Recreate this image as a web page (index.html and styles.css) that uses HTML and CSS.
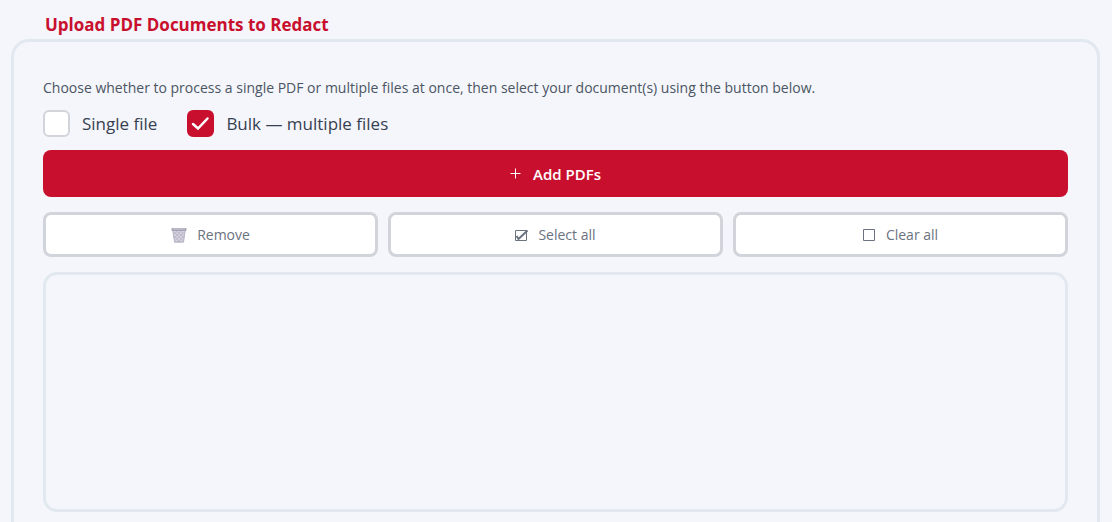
FILE: index.html
```html
<!DOCTYPE html>
<html lang="en">
<head>
<meta charset="utf-8">
<meta name="viewport" content="width=device-width, initial-scale=1">
<title>Upload PDF Documents to Redact</title>
<link rel="stylesheet" href="styles.css">
</head>
<body>
<main class="page">
  <h1 class="title" id="upload-title">Upload PDF Documents to Redact</h1>
  <section class="panel" aria-labelledby="upload-title">
    <p class="hint">Choose whether to process a single PDF or multiple files at once, then select your document(s) using the button below.</p>
    <div class="modes">
      <label class="mode" for="single"><input class="check" type="checkbox" id="single">Single file</label>
      <label class="mode" for="bulk"><input class="check" type="checkbox" id="bulk" checked>Bulk — multiple files</label>
    </div>
    <button class="add" type="button">
      <svg class="plus" viewBox="0 0 11 11" aria-hidden="true"><path d="M5.5 .5v10M.5 5.5h10"/></svg>
      <span>Add PDFs</span>
    </button>
    <div class="actions">
      <button class="action action-remove" type="button">
        <svg class="bin" viewBox="0 0 16 16" aria-hidden="true">
          <path d="M1.5 3.5h13l-1.6 11.2q-.1.8-1 .8H4.1q-.9 0-1-.8z" fill="#d6d3e0"/>
          <path d="M3 5l9.5 9M5.5 4l7.5 7M9 4l4.5 4.5M3.3 9l5.5 6M13 5l-9.5 9M10 4l-7 7M6.5 4L2.7 7.7M12.7 9L7 15" stroke="#b7b3c5" stroke-width=".8" fill="none"/>
          <path d="M2 4l1.5 11M14 4l-1.5 11" stroke="#b9b5c8" fill="none"/>
          <rect x=".5" y="1" width="15" height="3" rx="1" fill="#a5a1b2"/>
          <path d="M2 2h12" stroke="#d1cedb" fill="none"/>
          <path d="M3.5 15h9" stroke="#aaa6b8" fill="none"/>
        </svg>
        <span>Remove</span>
      </button>
      <button class="action" type="button">
        <svg class="box" viewBox="0 0 13 12" aria-hidden="true"><path d="M.5 1.5h11v10H.5z"/><path class="tick" d="M1.5 7l2 3L12.5 1.5"/></svg>
        <span>Select all</span>
      </button>
      <button class="action" type="button">
        <svg class="box" viewBox="0 0 13 12" aria-hidden="true"><path d="M.5 .5h11v11H.5z"/></svg>
        <span>Clear all</span>
      </button>
    </div>
    <div class="files" role="list" aria-label="Selected files"></div>
  </section>
</main>
</body>
</html>
```
FILE: styles.css
```css
* {
  box-sizing: border-box;
}

body {
  margin: 0;
  height: 100vh;
  overflow: hidden;
  background: #f4f6fb;
  color: #374151;
  font-family: "Segoe UI", "Open Sans", "Noto Sans", sans-serif;
}

.page {
  padding: 13px 12px 0 11px;
}

.title {
  margin: 0 0 2px;
  padding-left: 34px;
  color: #c8102e;
  font-size: 17px;
  line-height: 24px;
  font-weight: 700;
}

.panel {
  display: flex;
  flex-direction: column;
  padding: 36px 29px 30px;
  border: 3px solid #e2e8f0;
  border-radius: 18px;
}

.hint {
  margin: 0;
  color: #4b5563;
  font-size: 14px;
  line-height: 20px;
}

.modes {
  display: flex;
  flex-wrap: wrap;
  gap: 30px;
  margin: 12px 0 13px;
}

.mode {
  display: flex;
  align-items: center;
  gap: 12px;
  font-size: 17px;
  line-height: 27px;
}

.check {
  appearance: none;
  width: 27px;
  height: 27px;
  margin: 0;
  border: 2px solid #d1d5db;
  border-radius: 6px;
  background: #fff;
}

.check:checked {
  border-color: #c8102e;
  background: #c8102e url("data:image/svg+xml,%3Csvg xmlns='http://www.w3.org/2000/svg' viewBox='0 0 23 23'%3E%3Cpath d='M4 12l5 4.500L18.500 6.500' fill='none' stroke='white' stroke-width='2.500' stroke-linecap='round'/%3E%3C/svg%3E") center / 100% no-repeat;
}

.add,
.action {
  display: flex;
  align-items: center;
  justify-content: center;
  font-family: inherit;
  border-radius: 8px;
}

.add {
  gap: 12px;
  height: 47px;
  border: 0;
  background: #c8102e;
  color: #fff;
  font-size: 15px;
  font-weight: 600;
}

.plus {
  width: 11px;
  height: 11px;
  fill: none;
  stroke: #fff;
}

.actions {
  display: grid;
  grid-template-columns: repeat(3, 1fr);
  gap: 10px;
  margin: 15px 0;
}

.action {
  gap: 10px;
  height: 45px;
  border: 3px solid #d1d5db;
  background: #fff;
  color: #6b7280;
  font-size: 14px;
}

.bin {
  width: 16px;
  height: 16px;
}

.box {
  width: 13px;
  height: 12px;
  fill: none;
  stroke: #6b7280;
}

.tick {
  stroke-width: 2;
}

.files {
  min-height: 240px;
  border: 3px solid #e2e8f0;
  border-radius: 14px;
}
```
